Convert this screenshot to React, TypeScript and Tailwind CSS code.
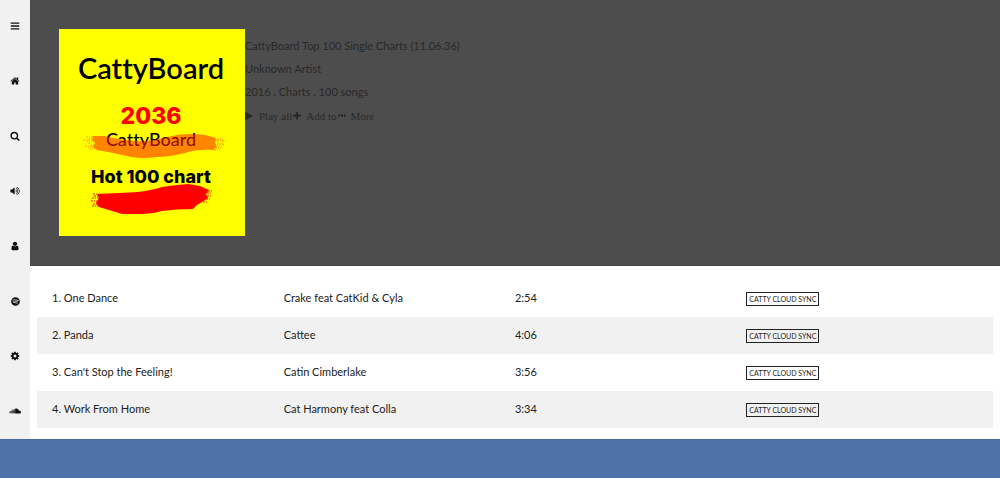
import type { ReactNode } from "react";
import { FaSoundcloud, FaSpotify } from "react-icons/fa";

const paths = {
  bars: "M1664 1344v128q0 26-19 45t-45 19h-1408q-26 0-45-19t-19-45v-128q0-26 19-45t45-19h1408q26 0 45 19t19 45zm0-512v128q0 26-19 45t-45 19h-1408q-26 0-45-19t-19-45v-128q0-26 19-45t45-19h1408q26 0 45 19t19 45zm0-512v128q0 26-19 45t-45 19h-1408q-26 0-45-19t-19-45v-128q0-26 19-45t45-19h1408q26 0 45 19t19 45z",
  home: "M1472 992v480q0 26-19 45t-45 19h-384v-384h-256v384h-384q-26 0-45-19t-19-45v-480q0-1 .5-3t.5-3l575-474 575 474q1 2 1 6zm223-69l-62 74q-8 9-21 11h-3q-13 0-21-7l-692-577-692 577q-12 8-24 7-13-2-21-11l-62-74q-8-10-7-23.5t11-21.5l719-599q32-26 76-26t76 26l244 204v-195q0-14 9-23t23-9h192q14 0 23 9t9 23v408l219 182q10 8 11 21.5t-7 23.5z",
  search: "M1216 832q0-185-131.5-316.5t-316.5-131.5-316.5 131.5-131.5 316.5 131.5 316.5 316.5 131.5 316.5-131.5 131.5-316.5zm512 832q0 52-38 90t-90 38q-54 0-90-38l-343-342q-179 124-399 124-143 0-273.5-55.5t-225-150-150-225-55.5-273.5 55.5-273.5 150-225 225-150 273.5-55.5 273.5 55.5 225 150 150 225 55.5 273.5q0 220-124 399l343 343q37 37 37 90z",
  volume: "M832 352v1088q0 26-19 45t-45 19-45-19l-333-333h-262q-26 0-45-19t-19-45v-384q0-26 19-45t45-19h262l333-333q19-19 45-19t45 19 19 45zm384 544q0 76-42.5 141.5t-112.5 93.5q-10 5-25 5-26 0-45-18.5t-19-45.5q0-21 12-35.5t29-25 34-23 29-36 12-56.5-12-56.5-29-36-34-23-29-25-12-35.5q0-27 19-45.5t45-18.5q15 0 25 5 70 27 112.5 93t42.5 142zm256 0q0 153-85 282.5t-225 188.5q-13 5-25 5-27 0-46-19t-19-45q0-39 39-59 56-29 76-44 74-54 115.5-135.5t41.5-173.5-41.5-173.5-115.5-135.5q-20-15-76-44-39-20-39-59 0-26 19-45t45-19q13 0 26 5 140 59 225 188.5t85 282.5zm256 0q0 230-127 422.5t-338 283.5q-13 5-26 5-26 0-45-19t-19-45q0-36 39-59 7-4 22.5-10.5t22.5-10.5q46-25 82-51 123-91 192-227t69-289-69-289-192-227q-36-26-82-51-7-4-22.5-10.5t-22.5-10.5q-39-23-39-59 0-26 19-45t45-19q13 0 26 5 211 91 338 283.5t127 422.5z",
  user: "M1536 1399q0 109-62.5 187t-150.5 78h-854q-88 0-150.5-78t-62.5-187q0-85 8.5-160.5t31.5-152 58.5-131 94-89 134.5-34.5q131 128 313 128t313-128q76 0 134.5 34.5t94 89 58.5 131 31.5 152 8.5 160.5zm-256-887q0 159-112.5 271.5t-271.5 112.5-271.5-112.5-112.5-271.5 112.5-271.5 271.5-112.5 271.5 112.5 112.5 271.5z",
  cog: "M1152 896q0-106-75-181t-181-75-181 75-75 181 75 181 181 75 181-75 75-181zm512-109v222q0 12-8 23t-20 13l-185 28q-19 54-39 91 35 50 107 138 10 12 10 25t-9 23q-27 37-99 108t-94 71q-12 0-26-9l-138-108q-44 23-91 38-16 136-29 186-7 28-36 28h-222q-14 0-24.5-8.5t-11.5-21.5l-28-184q-49-16-90-37l-141 107q-10 9-25 9-14 0-25-11-126-114-165-168-7-10-7-23 0-12 8-23 15-21 51-66.5t54-70.5q-27-50-41-99l-183-27q-13-2-21-12.5t-8-23.5v-222q0-12 8-23t19-13l186-28q14-46 39-92-40-57-107-138-10-12-10-24 0-10 9-23 26-36 98.5-107.5t94.5-71.5q13 0 26 10l138 107q44-23 91-38 16-136 29-186 7-28 36-28h222q14 0 24.5 8.5t11.5 21.5l28 184q49 16 90 37l142-107q9-9 24-9 13 0 25 10 129 119 165 170 7 8 7 22 0 12-8 23-15 21-51 66.5t-54 70.5q26 50 41 98l183 28q13 2 21 12.5t8 23.5z",
  play: "M1384 927l-1328 738q-23 13-39.5 3t-16.5-36v-1472q0-26 16.5-36t39.5 3l1328 738q23 13 23 31t-23 31z",
  plus: "M1600 736v192q0 40-28 68t-68 28h-416v416q0 40-28 68t-68 28h-192q-40 0-68-28t-28-68v-416h-416q-40 0-68-28t-28-68v-192q0-40 28-68t68-28h416v-416q0-40 28-68t68-28h192q40 0 68 28t28 68v416h416q40 0 68 28t28 68z",
  dots: "M576 736v192q0 40-28 68t-68 28h-192q-40 0-68-28t-28-68v-192q0-40 28-68t68-28h192q40 0 68 28t28 68zm512 0v192q0 40-28 68t-68 28h-192q-40 0-68-28t-28-68v-192q0-40 28-68t68-28h192q40 0 68 28t28 68zm512 0v192q0 40-28 68t-68 28h-192q-40 0-68-28t-28-68v-192q0-40 28-68t68-28h192q40 0 68 28t28 68z",
};

function Icon({ d }: { d: string }) {
  return (
    <svg viewBox="0 0 1792 1792" fill="currentColor" aria-hidden="true" className="size-[10px] shrink-0">
      <path d={d} />
    </svg>
  );
}

const nav: { label: string; icon: ReactNode }[] = [
  { label: "Menu", icon: <Icon d={paths.bars} /> },
  { label: "Home", icon: <Icon d={paths.home} /> },
  { label: "Search", icon: <Icon d={paths.search} /> },
  { label: "Volume", icon: <Icon d={paths.volume} /> },
  { label: "Profile", icon: <Icon d={paths.user} /> },
  { label: "Spotify", icon: <FaSpotify className="size-[9px]" /> },
  { label: "Settings", icon: <Icon d={paths.cog} /> },
  { label: "SoundCloud", icon: <FaSoundcloud className="size-3" /> },
];

const songs = [
  { title: "One Dance", artist: "Crake feat CatKid & Cyla", time: "2:54" },
  { title: "Panda", artist: "Cattee", time: "4:06" },
  { title: "Can't Stop the Feeling!", artist: "Catin Cimberlake", time: "3:56" },
  { title: "Work From Home", artist: "Cat Harmony feat Colla", time: "3:34" },
];

function Cover() {
  return (
    <svg
      viewBox="0 0 186 207"
      role="img"
      aria-label="CattyBoard Hot 100 chart cover"
      className="h-[207px] w-[186px] shrink-0 [font-variant-ligatures:none]"
    >
      <rect width="186" height="207" fill="#ffff00" />
      <text x="92" y="50" textAnchor="middle" fontSize="29" className="font-[Lato,sans-serif] font-semibold">
        CattyBoard
      </text>
      <text x="92" y="95" textAnchor="middle" fontSize="23" fill="#ff0000" className="font-[Inter,sans-serif] font-extrabold">
        2036
      </text>
      <text x="92" y="117" textAnchor="middle" fontSize="18" className="font-[Lato,sans-serif] font-medium">
        CattyBoard
      </text>
      <path
        d="M34 107L46 107Q60 111 76 112Q92 113 108 108Q126 103 146 106L157 109L156 114L158 118L154 121Q138 120 126 124Q110 128 98 128Q84 130 72 128Q56 124 38 121L34 118L36 114L33 111Z"
        fill="#ff2000"
        fillOpacity="0.55"
      />
      <path
        d="M27 108h8M24 111h9M29 114h6M26 117h8M30 120h6M158 110h5M158 112h9M158 115h7M159 118h5M155 121h6"
        stroke="#ffa000"
        strokeDasharray="2 1 1 1"
      />
      <path d="M30 109h5M28 112h6M32 116h4M29 118h6M157 111h7M158 114h5M158 116h7M157 119h5" stroke="#ffa000" strokeDasharray="1 1" />
      <text x="92" y="154" textAnchor="middle" fontSize="18" className="font-[Inter,sans-serif] font-extrabold">
        Hot 100 chart
      </text>
      <path
        d="M38 165Q62 164 79 163Q94 161 103 158Q116 156 129 155L141 157L150 161L147 165L149 169L143 173L138 176L134 180Q118 180 103 182Q94 185 84 185L63 185L50 181L40 178L37 174L40 169Z"
        fill="#ff0000"
      />
      <path
        d="M34 165h5M35 167h5M33 169h7M32 172h6M34 175h5M33 177h7M149 162h4M148 164h5M148 167h4M147 170h5M144 173h5"
        stroke="#ff1000"
        strokeDasharray="2 1 1 1"
      />
    </svg>
  );
}

export default function App() {
  return (
    <div className="flex min-h-screen flex-col bg-white font-[Lato,sans-serif] text-[11px] leading-4 text-[#222]">
      <div className="flex">
        <nav aria-label="Main" className="flex w-[30px] shrink-0 flex-col justify-between bg-[#f1f1f1] pt-[18px] pb-5">
          {nav.map((item) => (
            <button
              key={item.label}
              type="button"
              aria-label={item.label}
              className="flex h-4 w-full items-center justify-center text-[#111]"
            >
              {item.icon}
            </button>
          ))}
        </nav>

        <main className="min-w-0 flex-1">
          <header className="flex border-b border-[#454545] bg-[#4d4d4d] px-[29px] pt-[29px] pb-[29px] text-[#292929]">
            <Cover />
            <div className="flex flex-col gap-[7px] pt-[9px]">
              <h1>CattyBoard Top 100 Single Charts (11.06.36)</h1>
              <p>Unknown Artist</p>
              <p>2016 . Charts . 100 songs</p>
              <div className="flex font-['Liberation_Serif',serif] leading-[18px]">
                <button type="button" className="flex items-center gap-1">
                  <Icon d={paths.play} />
                  Play all
                </button>
                <button type="button" className="flex items-center gap-1">
                  <Icon d={paths.plus} />
                  Add to
                </button>
                <button type="button" className="flex items-center gap-1">
                  <Icon d={paths.dots} />
                  More
                </button>
              </div>
            </div>
          </header>

          <div className="px-[7px] pt-[14px] pb-[11px]">
            <table className="w-full table-fixed border-collapse">
              <colgroup>
                <col className="w-[25.8%]" />
                <col className="w-[24.2%]" />
                <col className="w-[24.2%]" />
                <col className="w-[25.8%]" />
              </colgroup>
              <tbody>
                {songs.map((song, i) => (
                  <tr key={song.title} className="h-[37px] even:bg-[#f1f1f1]">
                    <td className="pb-[2px] pl-[15px]">
                      {i + 1}. {song.title}
                    </td>
                    <td className="pb-[2px]">{song.artist}</td>
                    <td className="pb-[2px]">{song.time}</td>
                    <td>
                      <button type="button" className="block border border-[#222] px-[2px] text-[7px] leading-3">
                        CATTY CLOUD SYNC
                      </button>
                    </td>
                  </tr>
                ))}
              </tbody>
            </table>
          </div>
        </main>
      </div>
      <footer className="min-h-[39px] flex-1 border-t border-[#4569a0] bg-[#4e73a8]" />
    </div>
  );
}
